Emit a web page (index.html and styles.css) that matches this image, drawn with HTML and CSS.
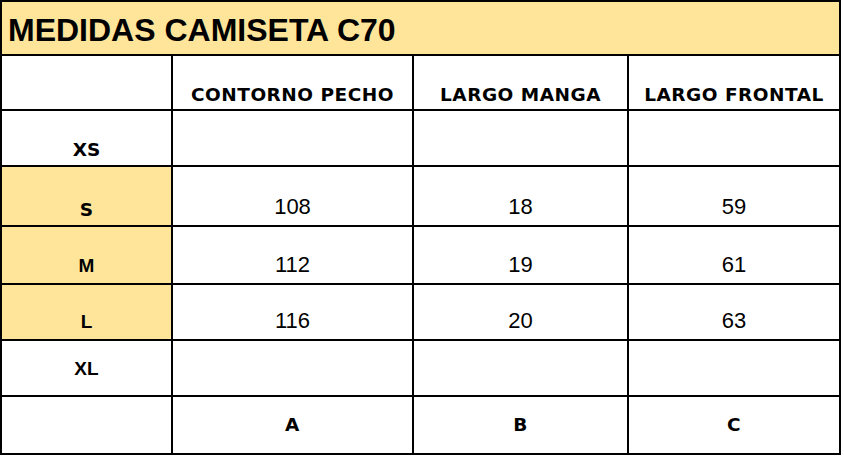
FILE: index.html
```html
<!DOCTYPE html>
<html>
<head>
<meta charset="utf-8">
<link rel="stylesheet" href="styles.css">
</head>
<body>
<div class="sheet">
  <div class="cell title"><span>MEDIDAS CAMISETA C70</span></div>

  <div class="cell"></div>
  <div class="cell head">CONTORNO PECHO</div>
  <div class="cell head">LARGO MANGA</div>
  <div class="cell head">LARGO FRONTAL</div>

  <div class="cell size geo">XS</div>
  <div class="cell"></div>
  <div class="cell"></div>
  <div class="cell"></div>

  <div class="cell size geo hl">S</div>
  <div class="cell num">108</div>
  <div class="cell num">18</div>
  <div class="cell num">59</div>

  <div class="cell size hl">M</div>
  <div class="cell num">112</div>
  <div class="cell num">19</div>
  <div class="cell num">61</div>

  <div class="cell size hl">L</div>
  <div class="cell num">116</div>
  <div class="cell num">20</div>
  <div class="cell num">63</div>

  <div class="cell size mid">XL</div>
  <div class="cell"></div>
  <div class="cell"></div>
  <div class="cell"></div>

  <div class="cell"></div>
  <div class="cell head mid">A</div>
  <div class="cell head mid">B</div>
  <div class="cell head mid">C</div>
</div>
</body>
</html>
```

FILE: styles.css
```css
html, body {
  margin: 0;
  padding: 0;
  background: #ffffff;
}

.sheet {
  display: grid;
  width: 837px;
  grid-template-columns: 169px 239px 213px 210px;
  grid-template-rows: 52px 53px 54px 58px 56px 54px 54px 56px;
  gap: 2px;
  padding: 2px;
  background: #000000;
}

.cell {
  background: #ffffff;
  display: flex;
  align-items: flex-end;
  justify-content: center;
  color: #000000;
  font-family: "Liberation Sans", Arial, sans-serif;
  line-height: 1;
  padding-bottom: 8px;
  box-sizing: border-box;
}

.title {
  grid-column: 1 / 5;
  background: #ffe599;
  justify-content: flex-start;
  padding-left: 6px;
  padding-bottom: 8px;
  font-size: 32px;
  font-weight: 700;
}

.head {
  font-family: "DejaVu Sans", sans-serif;
  font-weight: 700;
  font-size: 18.5px;
  letter-spacing: 0.5px;
  padding-bottom: 5px;
}

.size {
  font-weight: 700;
  font-size: 19px;
  padding-bottom: 8px;
}

.geo {
  font-family: "DejaVu Sans", sans-serif;
  font-weight: 700;
  font-size: 18.5px;
  padding-bottom: 6px;
}

.hl {
  background: #ffe599;
}

.num {
  font-size: 22px;
  padding-bottom: 7px;
}

.mid {
  align-items: center;
  padding-bottom: 0;
}
```
